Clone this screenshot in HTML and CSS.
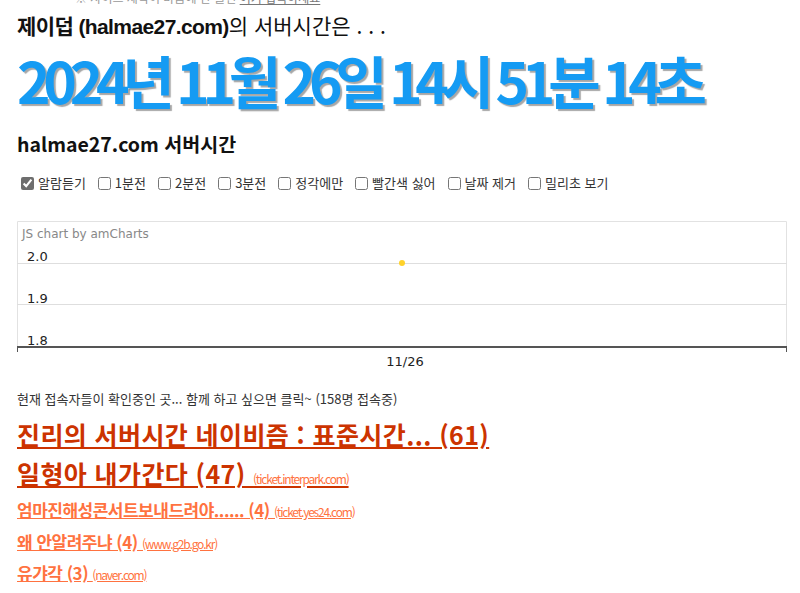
FILE: index.html
```html
<!DOCTYPE html>
<html lang="ko">
<head>
  <meta charset="UTF-8" />
  <title>halmae27.com 서버시간</title>
  <meta name="viewport" content="width=device-width, initial-scale=1.0" />
  <link rel="stylesheet" href="styles.css">
</head>
<body>
  <div class="wrap">
    <p class="notice">※ 사이트 제작이 마음에 안 들면 <a href="#">여기 접속하세요</a></p>

    <h1 class="title"><b>제이덥 (halmae27.com)</b>의 서버시간은 . . .</h1>
    <div class="clock">2024년 11월 26일 14시 51분 14초</div>

    <h2 class="subtitle">halmae27.com 서버시간</h2>

    <div class="options">
      <label><input type="checkbox" checked> 알람듣기</label>
      <label><input type="checkbox"> 1분전</label>
      <label><input type="checkbox"> 2분전</label>
      <label><input type="checkbox"> 3분전</label>
      <label><input type="checkbox"> 정각에만</label>
      <label><input type="checkbox"> 빨간색 싫어</label>
      <label><input type="checkbox"> 날짜 제거</label>
      <label><input type="checkbox"> 밀리초 보기</label>
    </div>

    <div class="chart">
      <svg width="771" height="150" viewBox="0 0 771 150">
        <path class="frame" d="M0.5 126 V0.5 H769.5 V126" />
        <text class="credit" x="5" y="17">JS chart by amCharts</text>
        <line class="grid" x1="0" y1="42.5" x2="770" y2="42.5" />
        <line class="grid" x1="0" y1="83.5" x2="770" y2="83.5" />
        <text class="label" x="10" y="40">2.0</text>
        <text class="label" x="10" y="82">1.9</text>
        <text class="label" x="10" y="124">1.8</text>
        <line class="axis" x1="0" y1="126" x2="770" y2="126" />
        <line class="tick" x1="0.5" y1="126" x2="0.5" y2="131" />
        <line class="tick" x1="769.5" y1="126" x2="769.5" y2="131" />
        <text class="label" x="388" y="145" text-anchor="middle">11/26</text>
        <circle class="dot" cx="385" cy="42" r="3" />
      </svg>
    </div>

    <p class="visitors">현재 접속자들이 확인중인 곳... 함께 하고 싶으면 클릭~ (158명 접속중)</p>

    <ul class="hot">
      <li class="big"><a href="#">진리의 서버시간 네이비즘 : 표준시간... (61)</a></li>
      <li class="big"><a href="#">일형아 내가간다 (47) <small>(ticket.interpark.com)</small></a></li>
      <li><a href="#">엄마진해성콘서트보내드려야...... (4) <small>(ticket.yes24.com)</small></a></li>
      <li><a href="#">왜 안알려주냐 (4) <small>(www.g2b.go.kr)</small></a></li>
      <li><a href="#">유갸각 (3) <small>(naver.com)</small></a></li>
      <li class="tiny"><a href="#">임조핑 티켓팅 가자 (2) <small>(ticket.melon.com)</small></a></li>
    </ul>
  </div>
</body>
</html>
```

FILE: styles.css
```css
body {
  margin: 0;
  font-family: "Noto Sans CJK KR", "Noto Sans", sans-serif;
  color: #222;
  background: #fff;
  overflow: hidden;
}

.wrap {
  padding: 0 17px;
  margin-top: -12px;
}

.notice {
  margin: 0;
  padding-left: 58px;
  font-size: 12px;
  line-height: 20px;
  color: #999;
}

.notice a {
  color: #777;
}

.title {
  margin: 0;
  padding-top: 2px;
  font-size: 21px;
  font-weight: 400;
  line-height: 30px;
  color: #111;
}

.title b {
  font-family: "Liberation Sans", "Noto Sans CJK KR", sans-serif;
  font-weight: 700;
  letter-spacing: -0.6px;
}

.clock {
  margin-top: 4px;
  font-size: 57px;
  font-weight: 700;
  line-height: 66px;
  letter-spacing: -7.3px;
  color: #159bf3;
  text-shadow: 2px 2px 1px rgba(0, 0, 0, 0.35);
  white-space: nowrap;
}

.subtitle {
  margin: 17px 0 0;
  font-size: 19.5px;
  line-height: 30px;
  color: #111;
}

.options {
  display: flex;
  gap: 8px;
  margin-top: 15px;
  font-size: 13px;
  line-height: 18px;
  color: #333;
}

.options label {
  display: flex;
  align-items: center;
  gap: 4px;
}

.options input {
  margin: 0 0 0 4px;
  width: 13px;
  height: 13px;
  accent-color: #6e6e6e;
}

.chart {
  margin-top: 29px;
  height: 150px;
}

.chart svg {
  display: block;
  font-family: "DejaVu Sans", sans-serif;
}

.frame {
  fill: none;
  stroke: #e2e2e2;
  stroke-width: 1;
}

.grid {
  stroke: #dedede;
  stroke-width: 1;
}

.axis {
  stroke: #555;
  stroke-width: 2;
}

.tick {
  stroke: #555;
  stroke-width: 1;
}

.credit {
  font-size: 12px;
  fill: #888;
}

.label {
  font-size: 13px;
  fill: #222;
}

.dot {
  fill: #ffd22a;
}

.visitors {
  margin: 18px 0 0;
  font-size: 13px;
  line-height: 20px;
  color: #333;
}

.hot {
  list-style: none;
  margin: 6px 0 0;
  padding: 0;
}

.hot li {
  font-size: 17px;
  font-weight: 700;
  line-height: 29.5px;
  letter-spacing: -0.5px;
}

.hot a {
  color: #ff7240;
}

.hot li.big {
  font-size: 25px;
  line-height: 39px;
  letter-spacing: 0.4px;
}

.hot li.big + li:not(.big) {
  margin-top: -3px;
}

.hot li.big a {
  color: #cc3300;
}

.hot small {
  font-size: 12px;
  font-weight: 400;
  letter-spacing: -1.2px;
  color: #ff7240;
}

.hot li.tiny {
  padding-left: 16px;
}
```
